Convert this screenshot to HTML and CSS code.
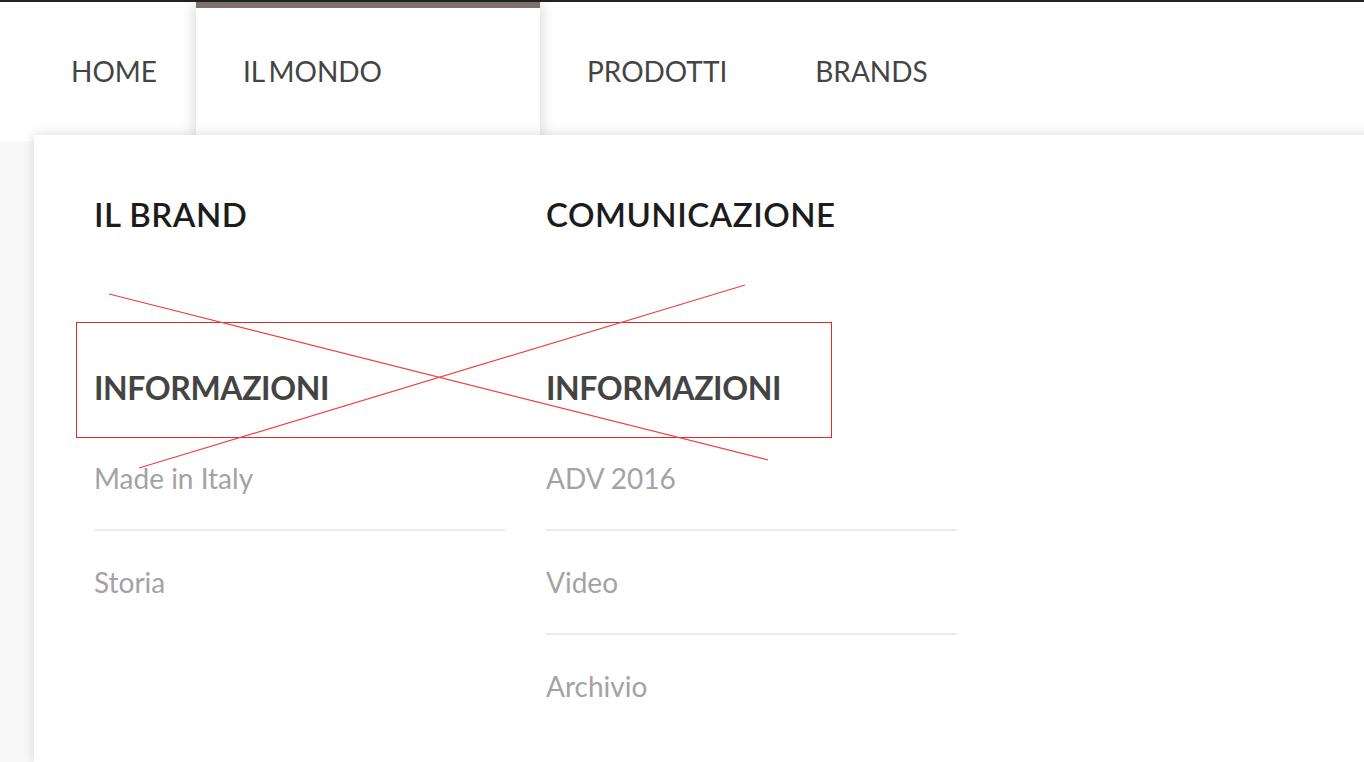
FILE: index.html
```html
<!DOCTYPE html>
<html lang="it">
<head>
    <meta charset="UTF-8">
    <meta name="viewport" content="width=device-width, initial-scale=1.0">
    <title>Il Mondo</title>
    <link rel="stylesheet" href="styles.css">
</head>
<body>
    <header class="topbar">
        <nav class="main-nav">
            <a class="nav-link" href="#">HOME</a>
            <a class="nav-link active" href="#">IL MONDO</a>
            <a class="nav-link" href="#">PRODOTTI</a>
            <a class="nav-link" href="#">BRANDS</a>
        </nav>
    </header>
    <div class="mega-menu">
        <div class="menu-col">
            <h3 class="menu-title">IL BRAND</h3>
            <h4 class="menu-subtitle">INFORMAZIONI</h4>
            <ul class="menu-links">
                <li><a href="#">Made in Italy</a></li>
                <li><a href="#">Storia</a></li>
            </ul>
        </div>
        <div class="menu-col">
            <h3 class="menu-title">COMUNICAZIONE</h3>
            <h4 class="menu-subtitle">INFORMAZIONI</h4>
            <ul class="menu-links">
                <li><a href="#">ADV 2016</a></li>
                <li><a href="#">Video</a></li>
                <li><a href="#">Archivio</a></li>
            </ul>
        </div>
    </div>
    <!-- review markup drawn over the page -->
    <svg class="markup" width="1364" height="762" viewBox="0 0 1364 762">
        <rect x="76.5" y="322.5" width="755" height="115" fill="none" stroke="#e02a2a" stroke-width="1"/>
        <line x1="109" y1="294" x2="768" y2="460" stroke="#e84444" stroke-width="1.2"/>
        <line x1="139" y1="468" x2="745" y2="285" stroke="#e84444" stroke-width="1.2"/>
    </svg>
</body>
</html>
```

FILE: styles.css
```css
body {
    margin: 0;
    background: #f9f9f9;
    font-family: Lato, "Liberation Sans", sans-serif;
    overflow: hidden;
    position: relative;
}
.topbar {
    position: relative;
    z-index: 1;
    height: 139px;
    background: #fff;
    border-top: 2px solid #222;
}
.main-nav {
    display: flex;
    height: 100%;
    padding-left: 27px;
}
.nav-link {
    padding: 0 44px;
    line-height: 139px;
    font-size: 28px;
    color: #444;
    text-decoration: none;
}
.nav-link.active {
    box-sizing: border-box;
    width: 344px;
    margin: 0 3px 0 -5px;
    padding: 0 0 6px 47px;
    line-height: 127px;
    word-spacing: -3px;
    background: #fff;
    border-top: 6px solid #7b7171;
    box-shadow: 0 0 14px rgba(0,0,0,0.18);
}
.mega-menu {
    position: relative;
    z-index: 2;
    display: flex;
    box-sizing: border-box;
    height: 627px;
    margin: -6px -20px 0 34px;
    padding: 59px 60px 0;
    background: #fff;
    box-shadow: 0 0 12px rgba(0,0,0,0.15);
}
.menu-col {
    width: 411px;
    margin-right: 41px;
}
.menu-title {
    margin: 0;
    font-size: 33px;
    line-height: 40px;
    font-weight: 600;
    letter-spacing: 0.5px;
    color: #1c1c1c;
}
.menu-subtitle {
    margin: 134px 0 19px;
    font-size: 32px;
    line-height: 40px;
    font-weight: 700;
    letter-spacing: -0.4px;
    color: #444;
}
.menu-links {
    list-style: none;
    margin: 0;
    padding: 0;
}
.menu-links li {
    border-bottom: 2px solid #ebebeb;
}
.menu-links li:last-child {
    border-bottom: none;
}
.menu-links a {
    display: block;
    line-height: 102px;
    font-size: 28px;
    color: #a3a3a3;
    text-decoration: none;
}
.markup {
    position: absolute;
    top: 0;
    left: 0;
    z-index: 3;
    pointer-events: none;
}
```
